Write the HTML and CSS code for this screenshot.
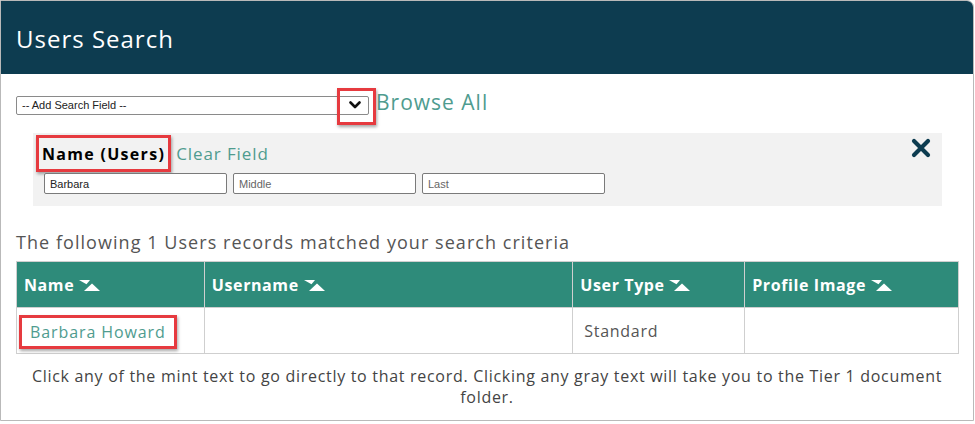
FILE: index.html
```html
<!DOCTYPE html>
<html lang="en">
<head>
    <meta charset="UTF-8">
    <title>Users Search</title>
    <link rel="stylesheet" href="styles.css">
</head>
<body>
    <div class="window">
        <div class="header">Users Search</div>
        <div class="content">
            <div class="search-row">
                <div class="select">
                    <span class="select-text">-- Add Search Field --</span>
                    <span class="chevron">
                        <svg width="12" height="8" viewBox="0 0 12 8"><path d="M1.5 1.5 L6 6 L10.5 1.5" fill="none" stroke="#111" stroke-width="2.6" stroke-linecap="round" stroke-linejoin="round"/></svg>
                    </span>
                </div>
                <a class="browse">Browse All</a>
            </div>

            <div class="field-box">
                <div class="field-top">
                    <div class="field-title">
                        <span class="mark label">Name (Users)</span>
                        <a class="clear">Clear Field</a>
                    </div>
                    <svg class="close" width="20" height="20" viewBox="0 0 20 20"><path d="M3 3 L17 17 M17 3 L3 17" stroke="#0d3c50" stroke-width="4.2" stroke-linecap="round"/></svg>
                </div>
                <div class="inputs">
                    <input type="text" value="Barbara">
                    <input type="text" placeholder="Middle">
                    <input type="text" placeholder="Last">
                </div>
            </div>

            <div class="matched">The following 1 Users records matched your search criteria</div>

            <table class="results">
                <thead>
                    <tr>
                        <th class="c1">Name <svg class="sort" width="23" height="12" viewBox="0 0 23 12"><polygon points="0,0 11,0 7.5,4.2" fill="#fff"/><polygon points="5,11 21,11 13,3.5" fill="#fff"/></svg></th>
                        <th class="c2">Username <svg class="sort" width="23" height="12" viewBox="0 0 23 12"><polygon points="0,0 11,0 7.5,4.2" fill="#fff"/><polygon points="5,11 21,11 13,3.5" fill="#fff"/></svg></th>
                        <th class="c3">User Type <svg class="sort" width="23" height="12" viewBox="0 0 23 12"><polygon points="0,0 11,0 7.5,4.2" fill="#fff"/><polygon points="5,11 21,11 13,3.5" fill="#fff"/></svg></th>
                        <th class="c4">Profile Image <svg class="sort" width="23" height="12" viewBox="0 0 23 12"><polygon points="0,0 11,0 7.5,4.2" fill="#fff"/><polygon points="5,11 21,11 13,3.5" fill="#fff"/></svg></th>
                    </tr>
                </thead>
                <tbody>
                    <tr>
                        <td class="first"><a class="mark record">Barbara Howard</a></td>
                        <td></td>
                        <td class="gray">Standard</td>
                        <td></td>
                    </tr>
                </tbody>
            </table>

            <div class="note">Click any of the mint text to go directly to that record. Clicking any gray text will take you to the Tier 1 document folder.</div>
        </div>
    </div>
</body>
</html>
```

FILE: styles.css
```css
body {
    margin: 0;
    background: #fff;
    font-family: "Open Sans", Lato, sans-serif;
}
.window {
    width: 972px;
    height: 419px;
    border: 1px solid #b9b9b9;
    border-top-right-radius: 7px;
    overflow: hidden;
    background: #fff;
}
.header {
    height: 72px;
    background: #0d3c50;
    color: #fff;
    font-size: 24px;
    letter-spacing: 1px;
    display: flex;
    align-items: center;
    padding-left: 15px;
    padding-top: 1px;
}
.content {
    padding: 0 15px;
}
.search-row {
    display: flex;
    align-items: center;
    margin-top: 21px;
    height: 20px;
}
.select {
    width: 346px;
    height: 17px;
    border: 1px solid #8a8a8a;
    border-radius: 2px;
    display: flex;
    align-items: center;
    justify-content: space-between;
    font-family: "Liberation Sans", Arial, sans-serif;
    font-size: 11px;
    color: #222;
    padding-left: 5px;
    box-sizing: content-box;
    position: relative;
}
.chevron {
    width: 20px;
    display: flex;
    justify-content: center;
    margin-right: 3px;
}
.chevron::after {
    content: "";
    position: absolute;
    right: -8px;
    top: -9px;
    width: 33px;
    height: 31px;
    border: 3px solid #e63a3f;
    box-shadow: 1px 2px 3px rgba(0, 0, 0, 0.35);
}
.browse {
    margin-left: 7px;
    font-size: 21px;
    letter-spacing: 1px;
    color: #4f9c8f;
    margin-top: -6px;
}
.field-box {
    margin: 18px 16px 0 17px;
    background: #f2f2f2;
    height: 73px;
    padding: 2px 11px 0 3px;
    box-sizing: border-box;
}
.field-top {
    display: flex;
    justify-content: space-between;
    align-items: flex-start;
}
.field-title {
    display: flex;
    align-items: center;
}
.mark {
    border: 3px solid #e63a3f;
    box-shadow: 1px 2px 3px rgba(0, 0, 0, 0.35);
}
.label {
    font-weight: bold;
    font-size: 16px;
    letter-spacing: 1.3px;
    color: #000;
    padding: 0 3px;
    height: 31px;
    line-height: 33px;
}
.clear {
    margin-left: 5px;
    font-size: 17px;
    letter-spacing: 0.9px;
    color: #4f9c8f;
}
.close {
    margin-top: 3px;
}
.inputs {
    display: flex;
    gap: 6px;
    margin-left: 8px;
    margin-top: 1px;
}
.inputs input {
    width: 183px;
    height: 21px;
    box-sizing: border-box;
    border: 1px solid #7a7a7a;
    border-radius: 2px;
    background: #fff;
    font-family: "Liberation Sans", Arial, sans-serif;
    font-size: 11px;
    color: #222;
    padding: 0 5px;
}
.inputs input::placeholder {
    color: #666;
}
.matched {
    margin-top: 24px;
    font-size: 18px;
    letter-spacing: 1.05px;
    color: #555;
    height: 25px;
}
.results {
    margin-top: 6px;
    border-collapse: collapse;
    width: 943px;
}
.results th {
    background: #2e8b7a;
    color: #fff;
    font-size: 16px;
    letter-spacing: 0.6px;
    text-align: left;
    height: 46px;
    padding: 0 7px;
    border: 1px solid #cfcfcf;
    box-sizing: border-box;
}
.sort {
    vertical-align: -1px;
    margin-left: 0;
}
.c1 { width: 188px; }
.c2 { width: 369px; }
.c3 { width: 172px; }
.c4 { width: 214px; }
.results td {
    height: 45px;
    border: 1px solid #cfcfcf;
    padding: 0 11px;
    font-size: 16px;
    letter-spacing: 0.7px;
    color: #555;
}
.results td.first {
    padding: 0 2px;
}
.record {
    display: inline-block;
    color: #4f9c8f;
    padding: 0 8px;
    letter-spacing: 0.9px;
    height: 28px;
    line-height: 28px;
    margin-top: 2px;
}
.note {
    text-align: center;
    font-size: 16px;
    letter-spacing: 0.7px;
    color: #444;
    line-height: 21px;
    margin-top: 12px;
    padding: 0 14px;
}
```
